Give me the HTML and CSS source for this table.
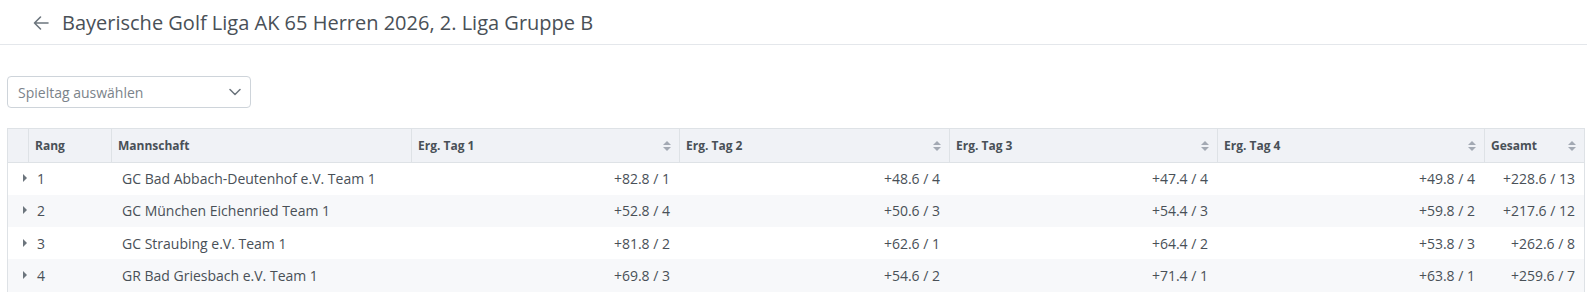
FILE: index.html
```html
<!DOCTYPE html>
<html lang="de">
<head>
<meta charset="utf-8">
<link rel="stylesheet" href="styles.css">
</head>
<body>
<header class="topbar">
  <svg class="back" width="18" height="18" viewBox="0 0 18 18"><path d="M16 9H2.5M8.5 3L2.5 9l6 6" fill="none" stroke="#6c757d" stroke-width="1.6" stroke-linecap="round" stroke-linejoin="round"/></svg>
  <h1 class="title">Bayerische Golf Liga AK 65 Herren 2026, 2. Liga Gruppe B</h1>
</header>
<main class="content">
  <div class="select">
    <span class="placeholder">Spieltag auswählen</span>
    <svg width="12" height="8" viewBox="0 0 12 8"><path d="M1 1.5l5 5 5-5" fill="none" stroke="#6c757d" stroke-width="1.5" stroke-linecap="round" stroke-linejoin="round"/></svg>
  </div>
  <table class="tbl">
    <colgroup>
      <col class="c-exp"><col class="c-rang"><col class="c-team"><col class="c-day"><col class="c-day2"><col class="c-day"><col class="c-day4"><col class="c-tot">
    </colgroup>
    <thead>
      <tr>
        <th></th>
        <th>Rang</th>
        <th>Mannschaft</th>
        <th><div class="sorth">Erg. Tag 1<span class="sort"></span></div></th>
        <th><div class="sorth">Erg. Tag 2<span class="sort"></span></div></th>
        <th><div class="sorth">Erg. Tag 3<span class="sort"></span></div></th>
        <th><div class="sorth">Erg. Tag 4<span class="sort"></span></div></th>
        <th><div class="sorth">Gesamt<span class="sort"></span></div></th>
      </tr>
    </thead>
    <tbody>
      <tr>
        <td class="exp"><span class="caret"></span></td><td class="rang">1</td><td class="team">GC Bad Abbach-Deutenhof e.V. Team 1</td>
        <td class="num">+82.8 / 1</td><td class="num">+48.6 / 4</td><td class="num">+47.4 / 4</td><td class="num">+49.8 / 4</td><td class="num">+228.6 / 13</td>
      </tr>
      <tr>
        <td class="exp"><span class="caret"></span></td><td class="rang">2</td><td class="team">GC München Eichenried Team 1</td>
        <td class="num">+52.8 / 4</td><td class="num">+50.6 / 3</td><td class="num">+54.4 / 3</td><td class="num">+59.8 / 2</td><td class="num">+217.6 / 12</td>
      </tr>
      <tr>
        <td class="exp"><span class="caret"></span></td><td class="rang">3</td><td class="team">GC Straubing e.V. Team 1</td>
        <td class="num">+81.8 / 2</td><td class="num">+62.6 / 1</td><td class="num">+64.4 / 2</td><td class="num">+53.8 / 3</td><td class="num">+262.6 / 8</td>
      </tr>
      <tr>
        <td class="exp"><span class="caret"></span></td><td class="rang">4</td><td class="team">GR Bad Griesbach e.V. Team 1</td>
        <td class="num">+69.8 / 3</td><td class="num">+54.6 / 2</td><td class="num">+71.4 / 1</td><td class="num">+63.8 / 1</td><td class="num">+259.6 / 7</td>
      </tr>
    </tbody>
  </table>
</main>
</body>
</html>
```
FILE: styles.css
```css
* { box-sizing: border-box; }
html, body { margin: 0; padding: 0; background: #fff; }
body {
  font-family: "Open Sans", "Noto Sans", sans-serif;
  color: #495057;
  width: 1587px;
  height: 295px;
  overflow: hidden;
}
.topbar {
  height: 45px;
  display: flex;
  align-items: center;
  padding-left: 32px;
  border-bottom: 1px solid #e4e7eb;
}
.back { flex: none; margin-right: 12px; margin-top: 1px; }
.title {
  margin: 0;
  font-size: 20px;
  font-weight: 400;
  color: #495057;
}
.content { padding: 31px 0 0 7px; }
.select {
  width: 244px;
  height: 32px;
  border: 1px solid #ced4da;
  border-radius: 4px;
  display: flex;
  align-items: center;
  justify-content: space-between;
  padding: 0 9px 0 10px;
  margin-bottom: 20px;
}
.placeholder { font-size: 14px; color: #7b838a; }
.tbl {
  border-collapse: collapse;
  table-layout: fixed;
  width: 1577px;
  font-size: 14px;
}
.c-exp { width: 21px; }
.c-rang { width: 83px; }
.c-team { width: 300px; }
.c-day { width: 268px; }
.c-day2 { width: 270px; }
.c-day4 { width: 267px; }
.c-tot { width: 100px; }
.tbl thead tr { height: 34px; }
.tbl th {
  background: #f0f2f6;
  border: 1px solid #dee2e6;
  font-size: 12px;
  font-weight: 700;
  text-align: left;
  padding: 0 8px 0 6px;
  color: #495057;
}
.sorth { display: flex; align-items: center; justify-content: space-between; }
.sort {
  position: relative;
  width: 8px;
  height: 10px;
  flex: none;
}
.sort::before, .sort::after {
  content: "";
  position: absolute;
  left: 0;
  border-left: 4px solid transparent;
  border-right: 4px solid transparent;
}
.sort::before { top: 0; border-bottom: 4px solid #a3a9b3; }
.sort::after { bottom: 0; border-top: 4px solid #a3a9b3; }
.tbl tbody tr { height: 32.3px; }
.tbl tbody tr:nth-child(even) { background: #f7f8fa; }
.tbl td {
  padding: 0 9px 0 10px;
  border-left: 1px solid transparent;
  white-space: nowrap;
}
.tbl td.exp { border-left: 1px solid #dee2e6; padding: 0 0 0 15px; }
.tbl td.rang { padding-left: 8px; }
.tbl td.team { padding-left: 10px; }
.tbl td.num { text-align: right; }
.caret {
  display: block;
  width: 0; height: 0;
  margin-top: -1px;
  border-top: 4px solid transparent;
  border-bottom: 4px solid transparent;
  border-left: 4px solid #6c757d;
}
.tbl td:last-child { border-right: 1px solid #dee2e6; }
```
